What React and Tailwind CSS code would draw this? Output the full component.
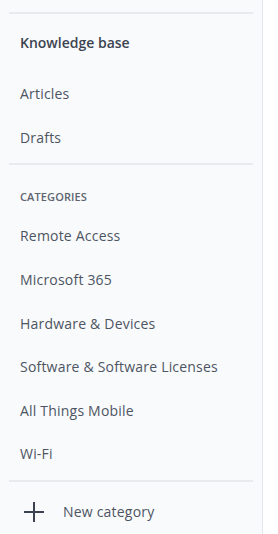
import React from 'react';

const categories = [
  'Remote Access',
  'Microsoft 365',
  'Hardware & Devices',
  'Software & Software Licenses',
  'All Things Mobile',
  'Wi-Fi',
];

const Divider = () => <div className="mx-[9px] h-[2px] bg-[#e8eaed]"></div>;

const NavItem = ({ children }) => (
  <div className="h-[43.6px] flex items-center px-[20px] text-[14px] tracking-[0.2px] text-[#4d5562] cursor-pointer">
    {children}
  </div>
);

const App = () => {
  return (
    <div className="w-[278px] h-[534px] bg-white flex" style={{ fontFamily: '"Open Sans", "Noto Sans", sans-serif' }}>
      <div className="w-[263px] h-full bg-[#f9fafc] border-r border-[#e4e8ee] flex flex-col overflow-hidden">
        <div className="pt-[12px]">
          <Divider />
        </div>

        {/* Knowledge base section */}
        <div className="pt-[6px]">
          <div className="h-[44px] mb-[8px] flex items-center px-[20px] text-[14px] font-semibold text-[#3c4350]">
            Knowledge base
          </div>
          <NavItem>Articles</NavItem>
          <NavItem>Drafts</NavItem>
        </div>

        <div className="pt-[4px]">
          <Divider />
        </div>

        {/* Categories */}
        <div className="pt-[24px] pb-[9px] px-[20px] text-[11px] leading-[16px] font-semibold text-[#5d6470] tracking-[0.01em]">
          CATEGORIES
        </div>
        <div className="flex flex-col">
          {categories.map((c) => (
            <NavItem key={c}>{c}</NavItem>
          ))}
        </div>

        <div className="pt-[4px]">
          <Divider />
        </div>

        {/* New category */}
        <div className="mt-[8px] h-[44px] flex items-center px-[22px] text-[14px] tracking-[0.2px] text-[#4d5562] cursor-pointer">
          <svg width="24" height="24" viewBox="0 0 24 24" className="shrink-0">
            <path d="M12 2v20M2 12h20" stroke="#3c4350" strokeWidth="2" fill="none" />
          </svg>
          <span className="ml-[17px]">New category</span>
        </div>
      </div>
    </div>
  );
};

export default App;
